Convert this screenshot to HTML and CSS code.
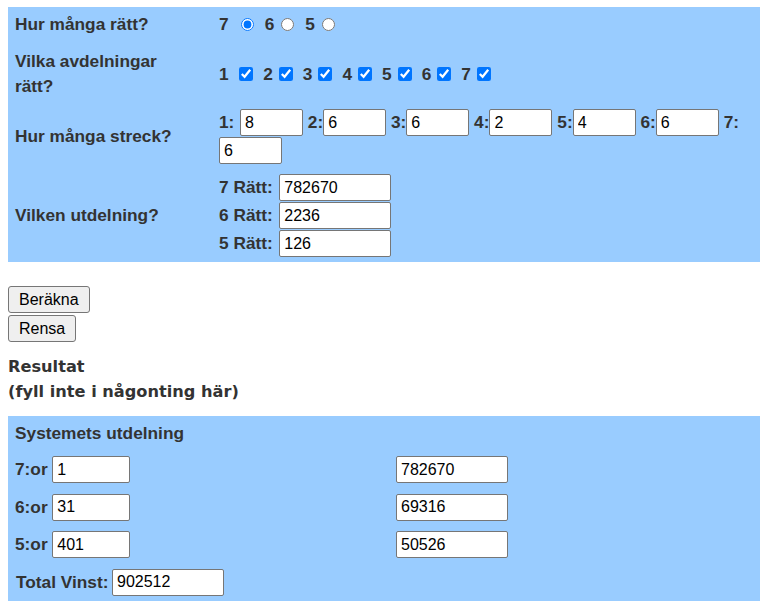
FILE: index.html
```html
<!DOCTYPE html>
<html lang="sv">
<head>
    <meta charset="UTF-8">
    <meta name="viewport" content="width=device-width, initial-scale=1.0">
    <title>Stryktipset - beräkna vinst</title>
    <link rel="icon" href="data:,">
    <link rel="stylesheet" href="styles.css">
</head>
<body>
    <form class="calc" onsubmit="return false">
        <!-- Indata -->
        <div class="panel input-panel">
            <div class="row row-ratt">
                <div class="label">Hur många rätt?</div>
                <div class="value opts">
                    <span class="n lead">7</span><input type="radio" name="ratt" value="7" checked>
                    <span class="n">6</span><input type="radio" name="ratt" value="6">
                    <span class="n">5</span><input type="radio" name="ratt" value="5">
                </div>
            </div>

            <div class="row">
                <div class="label">Vilka avdelningar rätt?</div>
                <div class="value opts">
                    <span class="n lead">1</span><input type="checkbox" checked>
                    <span class="n">2</span><input type="checkbox" checked>
                    <span class="n">3</span><input type="checkbox" checked>
                    <span class="n">4</span><input type="checkbox" checked>
                    <span class="n">5</span><input type="checkbox" checked>
                    <span class="n">6</span><input type="checkbox" checked>
                    <span class="n">7</span><input type="checkbox" checked>
                </div>
            </div>

            <div class="row">
                <div class="label">Hur många streck?</div>
                <div class="value streck">
                    <span class="n lead">1:</span><input type="text" value="8">
                    <span class="n">2:</span><input type="text" value="6">
                    <span class="n">3:</span><input type="text" value="6">
                    <span class="n">4:</span><input type="text" value="2">
                    <span class="n">5:</span><input type="text" value="4">
                    <span class="n">6:</span><input type="text" value="6">
                    <span class="n">7:</span><input type="text" value="6">
                </div>
            </div>

            <div class="row">
                <div class="label">Vilken utdelning?</div>
                <div class="value payout">
                    <span class="n">7 Rätt:</span><input type="text" value="782670">
                    <span class="n">6 Rätt:</span><input type="text" value="2236">
                    <span class="n">5 Rätt:</span><input type="text" value="126">
                </div>
            </div>
        </div>

        <div class="buttons">
            <button type="button">Beräkna</button>
            <button type="reset">Rensa</button>
        </div>

        <h4 class="result-title">Resultat<br>(fyll inte i någonting här)</h4>

        <!-- Resultat -->
        <div class="panel result-panel">
            <div class="title">Systemets utdelning</div>
            <div class="result-grid">
                <div class="cell"><span class="n">7:or</span><input type="text" class="short" value="1"></div>
                <div class="cell"><input type="text" value="782670"></div>
                <div class="cell"><span class="n">6:or</span><input type="text" class="short" value="31"></div>
                <div class="cell"><input type="text" value="69316"></div>
                <div class="cell"><span class="n">5:or</span><input type="text" class="short" value="401"></div>
                <div class="cell"><input type="text" value="50526"></div>
                <div class="cell total"><span class="n">Total Vinst:</span><input type="text" value="902512"></div>
            </div>
        </div>
    </form>
</body>
</html>
```

FILE: styles.css
```css
:root {
    --panel-color: #99ccff;
    --text-color: #333333;
    --label-size: 17.3px;
}

body {
    margin: 7px 3px 0 8px;
    font-family: "Liberation Sans", Arial, sans-serif;
    color: var(--text-color);
}

.panel {
    background-color: var(--panel-color);
    padding: 5px 7px;
}

.label,
.n,
.title {
    font-size: var(--label-size);
    font-weight: bold;
    line-height: 25px;
}

input[type="text"] {
    box-sizing: border-box;
    height: 27px;
    margin: 0;
    padding: 0 4px;
    border: 1px solid #767676;
    border-radius: 2px;
    background-color: #fff;
    color: #000;
    font: 16px "Liberation Sans", Arial, sans-serif;
}

input[type="radio"] {
    width: 13px;
    height: 13px;
    margin: 0;
}

input[type="checkbox"] {
    width: 14px;
    height: 14px;
    margin: 0;
}

/* Indata */
.input-panel {
    display: flex;
    flex-direction: column;
    gap: 10px;
}

.row {
    display: grid;
    grid-template-columns: 160px 1fr;
    column-gap: 44px;
    align-items: center;
}

.row-ratt {
    margin-bottom: 2px;
}

.value {
    display: flex;
    align-items: center;
}

.opts .n {
    margin-right: 6px;
}

.opts .lead {
    margin-right: 10.5px;
}

.opts input {
    margin-right: 10px;
}

.row-ratt .n {
    margin-right: 7px;
}

.row-ratt .lead {
    margin-right: 12px;
}

.row-ratt input {
    margin-right: 11px;
}

.streck {
    flex-wrap: wrap;
    row-gap: 1px;
}

.streck .lead {
    margin-right: 5.6px;
}

.streck input {
    width: 63px;
    margin-right: 4.8px;
}

.payout {
    display: grid;
    grid-template-columns: auto 112px;
    column-gap: 6.5px;
    row-gap: 1px;
    justify-content: start;
}

.payout input {
    width: 112px;
}

/* Knappar */
.buttons {
    display: flex;
    flex-direction: column;
    align-items: flex-start;
    gap: 2px;
    margin-top: 24px;
}

button {
    height: 27px;
    padding: 0 10px;
    border: 1px solid #767676;
    border-radius: 3px;
    background-color: #efefef;
    color: #000;
    font: 16px "Liberation Sans", Arial, sans-serif;
}

.result-title {
    margin: 12px 0;
    font-family: "DejaVu Sans", Verdana, sans-serif;
    font-size: 16.2px;
    font-weight: bold;
    line-height: 25px;
}

/* Resultat */
.result-panel {
    padding-bottom: 5px;
}

.result-grid {
    display: grid;
    grid-template-columns: 381px 1fr;
    row-gap: 10.5px;
    margin-top: 10px;
}

.cell {
    display: flex;
    align-items: center;
    gap: 4.6px;
}

.cell input {
    width: 112px;
}

.cell input.short {
    width: 78px;
}

.total {
    padding-left: 1px;
    gap: 3.5px;
}
```
